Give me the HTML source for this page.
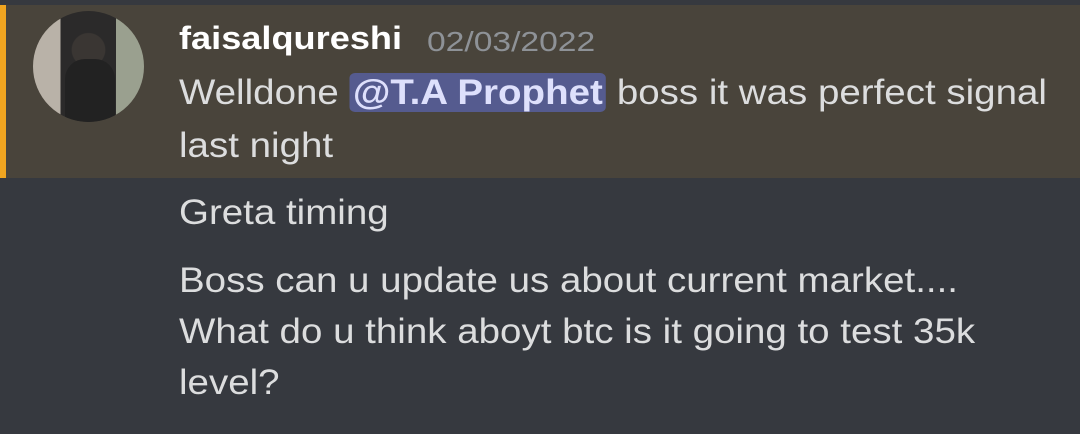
<!DOCTYPE html>
<html><head><style>
body{margin:0;width:1080px;height:434px;background:#36393f;overflow:hidden;font-family:"Liberation Sans","DejaVu Sans",sans-serif;position:relative}
.hl{position:absolute;left:0;top:5px;width:1080px;height:173px;background:#49443b}
.bar{position:absolute;left:0;top:5px;width:6px;height:173px;background:#f0a520}
.av{position:absolute;left:33px;top:11px;width:111px;height:111px;border-radius:50%;background:radial-gradient(circle at 50% 35%,#3a3633 0 18%,transparent 19%),linear-gradient(90deg,#b9b2a8 0 25%,#2b2a2a 25% 75%,#9aa08f 75%);overflow:hidden}
.av:after{content:"";position:absolute;left:32px;top:48px;width:50px;height:70px;background:#222;border-radius:20px 20px 0 0}
.t{position:absolute;left:179px;color:#dcddde;font-size:35px;white-space:nowrap;transform:scaleX(1.1);transform-origin:0 0}
.name{position:absolute;left:179px;top:20px;color:#fff;font-weight:bold;font-size:32px;transform:scaleX(1.13);transform-origin:0 0}
.date{position:absolute;left:427px;top:26px;color:#8e9297;font-size:28px;transform:scaleX(1.2);transform-origin:0 0}
.m{background:#555b8f;color:#dee0fc;font-weight:bold;border-radius:5px;padding:0 3px}
</style></head><body>
<div class="hl"></div><div class="bar"></div>
<div class="av"></div>
<div class="name">faisalqureshi</div>
<div class="date">02/03/2022</div>
<div class="t" style="top:73px">Welldone <span class="m">@T.A Prophet</span> boss it was perfect signal</div>
<div class="t" style="top:126px">last night</div>
<div class="t" style="top:193px">Greta timing</div>
<div class="t" style="top:261px">Boss can u update us about current market....</div>
<div class="t" style="top:312px">What do u think aboyt btc is it going to test 35k</div>
<div class="t" style="top:363px">level?</div>
</body></html>
